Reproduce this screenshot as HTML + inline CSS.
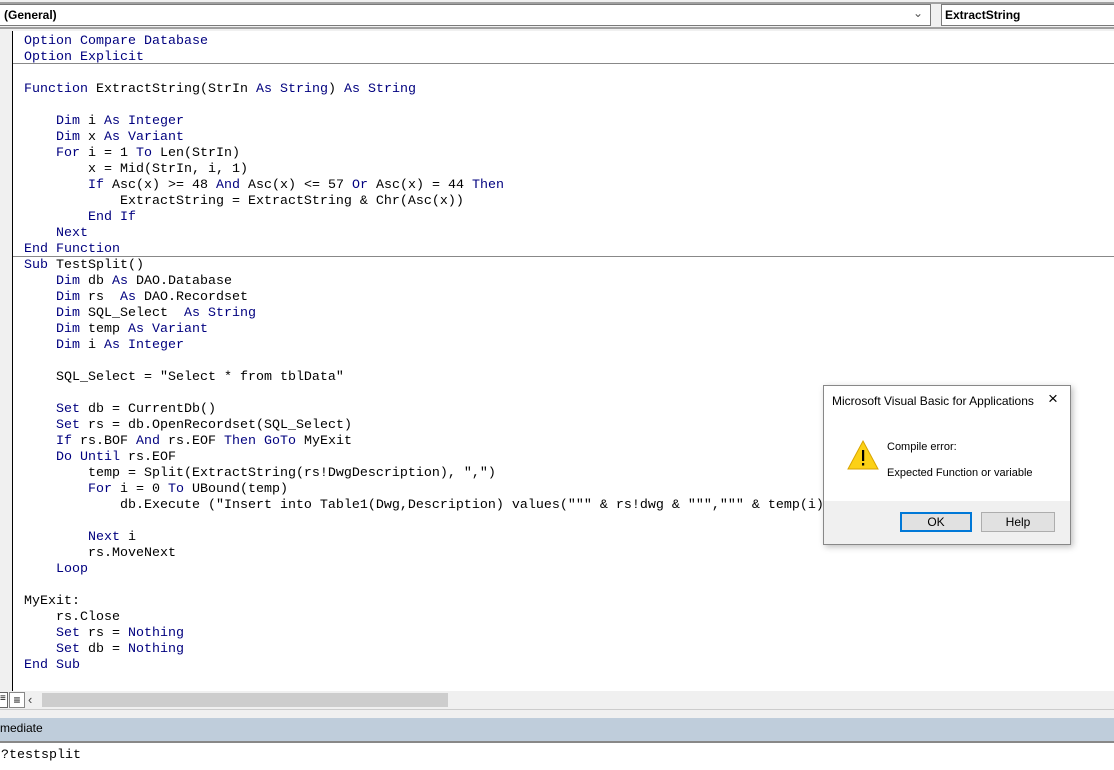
<!DOCTYPE html>
<html><head><style>
body{margin:0;width:1114px;height:770px;overflow:hidden;background:#fff;position:relative;font-family:"Liberation Sans",sans-serif}
.a{position:absolute}
pre{margin:0;font-family:"Liberation Mono",monospace;font-size:13.33px;line-height:16px;color:#000}
.k{color:#00007f}
.btn{position:absolute;height:18px;border:1px solid #adadad;background:#e1e1e1;font-size:12px;text-align:center;line-height:18px}
</style></head><body>
<div class="a" style="left:0;top:0;width:1114px;height:31px;background:#f0f0f0"></div>
<div class="a" style="left:0;top:2px;width:1114px;height:2px;background:#a0a0a0"></div>
<div class="a" style="left:0;top:4px;width:930px;height:20px;background:#fff;border:1px solid #7a7a7a;border-left:none"></div>
<div class="a" style="left:4px;top:8px;font-size:12px;font-weight:bold">(General)</div>
<div class="a" style="left:913px;top:6px;font-size:12px;color:#555">&#8964;</div>
<div class="a" style="left:941px;top:4px;width:180px;height:20px;background:#fff;border:1px solid #7a7a7a"></div>
<div class="a" style="left:945px;top:8px;font-size:12px;font-weight:bold">ExtractString</div>
<div class="a" style="left:0;top:27px;width:1114px;height:2px;background:#a0a0a0"></div>
<div class="a" style="left:0;top:31px;width:12px;height:660px;background:#f0f0f0"></div>
<div class="a" style="left:12px;top:31px;width:1px;height:660px;background:#000"></div>
<div class="a" style="left:13px;top:63px;width:1101px;height:1px;background:#888"></div>
<div class="a" style="left:13px;top:256px;width:1101px;height:1px;background:#888"></div>
<pre class="a" style="left:24px;top:34px"><span class="k">Option Compare Database</span>
<span class="k">Option Explicit</span>

<span class="k">Function</span> ExtractString(StrIn <span class="k">As String</span>) <span class="k">As String</span>

    <span class="k">Dim</span> i <span class="k">As Integer</span>
    <span class="k">Dim</span> x <span class="k">As Variant</span>
    <span class="k">For</span> i = 1 <span class="k">To</span> Len(StrIn)
        x = Mid(StrIn, i, 1)
        <span class="k">If</span> Asc(x) &gt;= 48 <span class="k">And</span> Asc(x) &lt;= 57 <span class="k">Or</span> Asc(x) = 44 <span class="k">Then</span>
            ExtractString = ExtractString &amp; Chr(Asc(x))
        <span class="k">End If</span>
    <span class="k">Next</span>
<span class="k">End Function</span>
<span class="k">Sub</span> TestSplit()
    <span class="k">Dim</span> db <span class="k">As</span> DAO.Database
    <span class="k">Dim</span> rs  <span class="k">As</span> DAO.Recordset
    <span class="k">Dim</span> SQL_Select  <span class="k">As String</span>
    <span class="k">Dim</span> temp <span class="k">As Variant</span>
    <span class="k">Dim</span> i <span class="k">As Integer</span>

    SQL_Select = "Select * from tblData"

    <span class="k">Set</span> db = CurrentDb()
    <span class="k">Set</span> rs = db.OpenRecordset(SQL_Select)
    <span class="k">If</span> rs.BOF <span class="k">And</span> rs.EOF <span class="k">Then GoTo</span> MyExit
    <span class="k">Do Until</span> rs.EOF
        temp = Split(ExtractString(rs!DwgDescription), ",")
        <span class="k">For</span> i = 0 <span class="k">To</span> UBound(temp)
            db.Execute ("Insert into Table1(Dwg,Description) values(""" &amp; rs!dwg &amp; """,""" &amp; temp(i) &amp; """)")

        <span class="k">Next</span> i
        rs.MoveNext
    <span class="k">Loop</span>

MyExit:
    rs.Close
    <span class="k">Set</span> rs = <span class="k">Nothing</span>
    <span class="k">Set</span> db = <span class="k">Nothing</span>
<span class="k">End Sub</span></pre>
<div class="a" style="left:0;top:691px;width:1114px;height:18px;background:#f0f0f0"></div>
<div class="a" style="left:0;top:692px;width:7px;height:14px;border:1px solid #666;border-left:none;background:#fff;font-size:10px;line-height:12px">&#8801;</div>
<div class="a" style="left:9px;top:692px;width:14px;height:14px;border:1px solid #888;background:#fff;font-size:12px;line-height:14px;text-align:center">&#8801;</div>
<div class="a" style="left:28px;top:692px;font-size:13px;color:#444">&lsaquo;</div>
<div class="a" style="left:42px;top:693px;width:406px;height:14px;background:#cdcdcd"></div>
<div class="a" style="left:448px;top:693px;width:666px;height:14px;background:#f0f0f0"></div>
<div class="a" style="left:0;top:709px;width:1114px;height:9px;background:#f0f0f0;border-top:1px solid #ccc"></div>
<div class="a" style="left:0;top:718px;width:1114px;height:23px;background:#bfcddb"></div>
<div class="a" style="left:0;top:721px;font-size:12px;color:#000">mediate</div>
<div class="a" style="left:0;top:741px;width:1114px;height:2px;background:#888"></div>
<pre class="a" style="left:1px;top:748px">?testsplit</pre>
<div class="a" style="left:823px;top:385px;width:246px;height:158px;background:#fff;border:1px solid #888;box-shadow:2px 2px 6px rgba(0,0,0,.25)">
 <div class="a" style="left:8px;top:8px;font-size:12px">Microsoft Visual Basic for Applications</div>
 <div class="a" style="left:224px;top:3px;font-size:17px;font-weight:300">&#215;</div>
 <svg class="a" style="left:22px;top:53px" width="34" height="32"><polygon points="17,2 32,30 2,30" fill="#fcd116" stroke="#d9a400" stroke-width="1"/><rect x="16" y="11" width="2.2" height="11" fill="#000"/><rect x="16" y="24" width="2.2" height="2.5" fill="#000"/></svg>
 <div class="a" style="left:63px;top:55px;font-size:11px">Compile error:</div>
 <div class="a" style="left:63px;top:81px;font-size:11px">Expected Function or variable</div>
 <div class="a" style="left:0;top:115px;width:246px;height:43px;background:#f0f0f0"></div>
 <div class="btn" style="left:76px;top:126px;width:68px;border:2px solid #0078d7;height:16px;line-height:16px">OK</div>
 <div class="btn" style="left:157px;top:126px;width:72px">Help</div>
</div>
</body></html>
